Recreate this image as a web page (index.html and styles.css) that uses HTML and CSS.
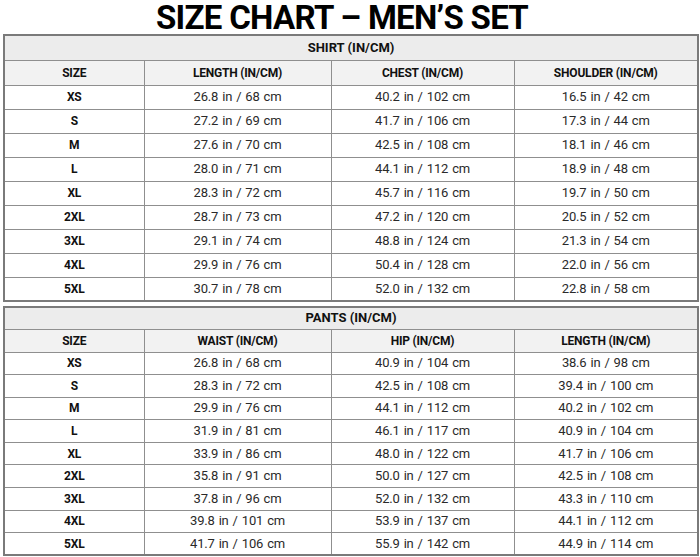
FILE: index.html
```html
<!DOCTYPE html>
<html>
<head>
<meta charset="utf-8">
<link rel="stylesheet" href="styles.css">
</head>
<body>
<div class="page">
  <h1 class="title">SIZE CHART – MEN’S SET</h1>
  <table class="chart shirt">
    <colgroup><col class="c1"><col class="c2"><col class="c3"><col class="c4"></colgroup>
    <tr class="section"><th colspan="4">SHIRT (IN/CM)</th></tr>
    <tr class="heads"><th>SIZE</th><th>LENGTH (IN/CM)</th><th>CHEST (IN/CM)</th><th>SHOULDER (IN/CM)</th></tr>
    <tr><th>XS</th><td>26.8 in / 68 cm</td><td>40.2 in / 102 cm</td><td>16.5 in / 42 cm</td></tr>
    <tr><th>S</th><td>27.2 in / 69 cm</td><td>41.7 in / 106 cm</td><td>17.3 in / 44 cm</td></tr>
    <tr><th>M</th><td>27.6 in / 70 cm</td><td>42.5 in / 108 cm</td><td>18.1 in / 46 cm</td></tr>
    <tr><th>L</th><td>28.0 in / 71 cm</td><td>44.1 in / 112 cm</td><td>18.9 in / 48 cm</td></tr>
    <tr><th>XL</th><td>28.3 in / 72 cm</td><td>45.7 in / 116 cm</td><td>19.7 in / 50 cm</td></tr>
    <tr><th>2XL</th><td>28.7 in / 73 cm</td><td>47.2 in / 120 cm</td><td>20.5 in / 52 cm</td></tr>
    <tr><th>3XL</th><td>29.1 in / 74 cm</td><td>48.8 in / 124 cm</td><td>21.3 in / 54 cm</td></tr>
    <tr><th>4XL</th><td>29.9 in / 76 cm</td><td>50.4 in / 128 cm</td><td>22.0 in / 56 cm</td></tr>
    <tr><th>5XL</th><td>30.7 in / 78 cm</td><td>52.0 in / 132 cm</td><td>22.8 in / 58 cm</td></tr>
  </table>
  <table class="chart pants">
    <colgroup><col class="c1"><col class="c2"><col class="c3"><col class="c4"></colgroup>
    <tr class="section"><th colspan="4">PANTS (IN/CM)</th></tr>
    <tr class="heads"><th>SIZE</th><th>WAIST (IN/CM)</th><th>HIP (IN/CM)</th><th>LENGTH (IN/CM)</th></tr>
    <tr><th>XS</th><td>26.8 in / 68 cm</td><td>40.9 in / 104 cm</td><td>38.6 in / 98 cm</td></tr>
    <tr><th>S</th><td>28.3 in / 72 cm</td><td>42.5 in / 108 cm</td><td>39.4 in / 100 cm</td></tr>
    <tr><th>M</th><td>29.9 in / 76 cm</td><td>44.1 in / 112 cm</td><td>40.2 in / 102 cm</td></tr>
    <tr><th>L</th><td>31.9 in / 81 cm</td><td>46.1 in / 117 cm</td><td>40.9 in / 104 cm</td></tr>
    <tr><th>XL</th><td>33.9 in / 86 cm</td><td>48.0 in / 122 cm</td><td>41.7 in / 106 cm</td></tr>
    <tr><th>2XL</th><td>35.8 in / 91 cm</td><td>50.0 in / 127 cm</td><td>42.5 in / 108 cm</td></tr>
    <tr><th>3XL</th><td>37.8 in / 96 cm</td><td>52.0 in / 132 cm</td><td>43.3 in / 110 cm</td></tr>
    <tr><th>4XL</th><td>39.8 in / 101 cm</td><td>53.9 in / 137 cm</td><td>44.1 in / 112 cm</td></tr>
    <tr><th>5XL</th><td>41.7 in / 106 cm</td><td>55.9 in / 142 cm</td><td>44.9 in / 114 cm</td></tr>
  </table>
</div>
</body>
</html>
```
FILE: styles.css
```css
html, body {
  margin: 0;
  padding: 0;
  background: #ffffff;
}
.page {
  width: 700px;
  height: 557px;
  padding: 0 3px;
  box-sizing: border-box;
  font-family: Roboto, "Liberation Sans", sans-serif;
  color: #111;
  overflow: hidden;
}
.title {
  margin: 0;
  height: 34px;
  line-height: 32px;
  padding-top: 2px;
  padding-right: 16px;
  box-sizing: border-box;
  text-align: center;
  font-size: 33px;
  font-weight: 700;
  color: #000;
  letter-spacing: -0.7px;
}
.chart {
  width: 694px;
  border-collapse: collapse;
  table-layout: fixed;
  border: 2px solid #7a7a7a;
}
.chart .c1 { width: 140px; }
.chart .c2 { width: 187px; }
.chart .c3 { width: 183px; }
.chart .c4 { width: 184px; }
.chart th, .chart td {
  border: 1px solid #8f8f8f;
  padding: 0;
  text-align: center;
  vertical-align: middle;
  line-height: 14px;
}
.chart th {
  font-weight: 700;
  font-size: 12px;
  letter-spacing: -0.2px;
  color: #111;
}
.chart td {
  font-weight: 400;
  font-size: 13px;
  letter-spacing: -0.2px;
  word-spacing: 1px;
  color: #2a2a2a;
}
.chart .section th {
  background: #ececec;
  font-size: 13px;
  letter-spacing: 0;
}
.chart .heads th {
  background: #f2f2f2;
}
.shirt tr { height: 24px; }
.shirt .section { height: 25px; }
.shirt .heads { height: 25px; }
.pants {
  margin-top: 4px;
}
.pants tr { height: 22.6px; }
.pants .section { height: 22px; }
.pants .heads { height: 23px; }
```
